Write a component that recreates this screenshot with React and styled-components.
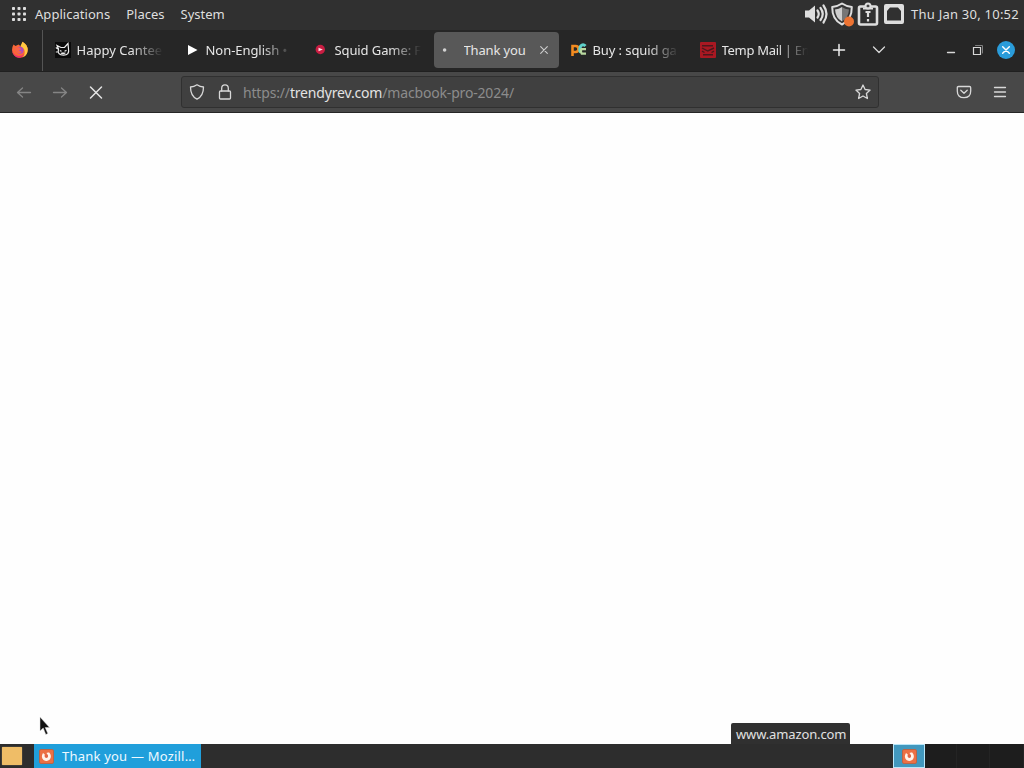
import React from 'react';
import styled, { createGlobalStyle } from 'styled-components';

const GlobalStyle = createGlobalStyle`
    * {
        box-sizing: border-box;
    }
    body {
        margin: 0;
        overflow: hidden;
        background: #fefefe;
    }
`;

const Desktop = styled.div`
    position: relative;
    display: flex;
    flex-direction: column;
    width: 1024px;
    height: 768px;
    overflow: hidden;
    font-family: "Noto Sans", "Open Sans", sans-serif;
    font-size: 13px;
    color: #dfdfdf;
    cursor: default;
`;

const Icon = styled.svg`
    display: block;
    flex: none;
    overflow: visible;
`;

const Text = styled.span`
    letter-spacing: ${(props) => props.$track || 0}px;
    white-space: nowrap;
`;

const TopPanel = styled.header`
    display: flex;
    align-items: center;
    height: 30px;
    padding: 0 3px 2px 12px;
    background: #303030;
`;

const Menu = styled.nav`
    display: flex;
    gap: 16px;
    margin-left: 9px;
    flex: 1;
`;

const Tray = styled.div`
    display: flex;
    align-items: center;
    gap: 2px;
    margin-right: 5px;
`;

const Clock = styled.div`
    width: 110px;
`;

const TabBar = styled.div`
    display: flex;
    align-items: stretch;
    height: 41px;
    background: #262626;
`;

const Pinned = styled.div`
    display: flex;
    align-items: center;
    width: 43px;
    padding: 0 0 1px 11px;
    margin-right: 2px;
    border-right: 1px solid #545454;
`;

const TabBox = styled.div`
    display: flex;
    align-items: center;
    width: 125px;
    height: 36px;
    margin: 2px 2px 0;
    padding: 0 8px;
    border-radius: 4px;
    background: ${(props) => (props.$active ? '#585858' : 'transparent')};
`;

const TabLabel = styled.div`
    width: ${(props) => (props.$active ? 76 : 88)}px;
    flex: none;
    margin-left: 5.5px;
    overflow: hidden;
    white-space: nowrap;
    letter-spacing: ${(props) => props.$track || 0}px;
    color: #e6e6e6;
    mask-image: ${(props) => (props.$active ? 'none' : 'linear-gradient(to right, #000 62%, transparent 98%)')};
`;

const TabTools = styled.div`
    display: flex;
    align-items: center;
    gap: 27px;
    padding: 0 0 2px 14px;
    flex: 1;
`;

const WindowButtons = styled.div`
    display: flex;
    align-items: center;
    gap: 16px;
    padding: 0 9px 1px 0;
`;

const CloseButton = styled.div`
    display: flex;
    align-items: center;
    justify-content: center;
    width: 18px;
    height: 18px;
    margin-left: -3px;
    border-radius: 50%;
    background: #2a9cda;
`;

const NavBar = styled.div`
    display: flex;
    align-items: center;
    height: 42px;
    padding: 0 16px;
    border-top: 1px solid #202020;
    border-bottom: 1px solid #262626;
    background: #484848;
`;

const NavButtons = styled.div`
    display: flex;
    gap: 20px;
    width: 165px;
`;

const UrlBar = styled.div`
    display: flex;
    align-items: center;
    width: 698px;
    height: 32px;
    padding: 0 7px;
    border: 1px solid #303030;
    border-radius: 3px;
    background: #404040;
`;

const LockIcon = styled(Icon)`
    margin-left: 12px;
`;

const Url = styled.div`
    flex: 1;
    margin-left: 10px;
    font-size: 14px;
    color: #8c8c8c;
    white-space: nowrap;
    letter-spacing: -0.17px;
`;

const Domain = styled.span`
    color: #e3e3e3;
`;

const NavRight = styled.div`
    display: flex;
    gap: 20px;
    margin-left: auto;
`;

const Page = styled.main`
    flex: 1;
    background: #fefefe;
`;

const Taskbar = styled.footer`
    display: flex;
    height: 24px;
    background: #2d2d2d;
`;

const ShowDesktop = styled.div`
    width: 20px;
    height: 18px;
    margin: 3px 12px 0 2px;
    border-radius: 1px;
    background: #efbd67;
    box-shadow: 0 0 1px #fbd690;
`;

const Task = styled.div`
    display: flex;
    align-items: center;
    gap: 8px;
    width: 167px;
    padding-left: 5px;
    background: #209fdb;
    color: #eef9ff;
`;

const Workspaces = styled.div`
    display: grid;
    grid-template-columns: 32px 32px 33px 34px;
    margin-left: auto;
`;

const Workspace = styled.div`
    display: flex;
    align-items: center;
    justify-content: center;
    border: ${(props) => (props.$current ? '1px solid #b9e7fa' : '0')};
    border-right: ${(props) => (props.$current ? '1px solid #b9e7fa' : '1px solid #242424')};
    background: ${(props) => (props.$current ? '#4298be' : '#1d1d1d')};
`;

const StatusTip = styled.div`
    position: absolute;
    left: 731px;
    bottom: 24px;
    width: 119px;
    height: 21px;
    padding-left: 5px;
    border-radius: 2px 2px 0 0;
    background: #303030;
    color: #e1e1e1;
    line-height: 23px;
`;

const Pointer = styled.div`
    position: absolute;
    left: 40px;
    top: 717px;
`;

const line = {
    fill: 'none',
    stroke: '#d8d8d8',
    strokeWidth: 1.3,
    strokeLinecap: 'round',
    strokeLinejoin: 'round',
};

const AppsIcon = () => (
    <Icon width="14" height="14" fill="#dedede">
        {[0, 5.5, 11].map((y) =>
            [0, 5.5, 11].map((x) => <rect key={`${x}-${y}`} x={x} y={y} width="3" height="3" rx="0.8" />)
        )}
    </Icon>
);

const VolumeIcon = () => (
    <Icon width="24" height="24" viewBox="0 0 24 24">
        <path d="M1 8.500h4l6-5v17l-6-5H1z" fill="#dedede" />
        <path d="M13.500 8.500q2.500 3.500 0 7M16.500 6q4.500 6 0 12M19.500 3.500q6 8.500 0 17" fill="none" stroke="#dedede" strokeWidth="2.200" strokeLinecap="round" />
    </Icon>
);

const UpdateIcon = () => (
    <Icon width="24" height="24" viewBox="0 0 24 24">
        <path d="M12 1.500q5 3.200 9.800 3.600Q22 18 12 22.500 2 18 2.200 5.100 7 4.700 12 1.500z" fill="#343434" stroke="#dedede" strokeWidth="2" strokeLinejoin="round" />
        <path d="M12 5v14.500Q5.500 16 5 7.500 9 7 12 5z" fill="#cecece" />
        <path d="M12 5v14.500Q18.500 16 19 7.500 15 7 12 5z" fill="#777" />
        <circle cx="19" cy="19.500" r="5" fill="#ed7332" />
    </Icon>
);

const ClipboardIcon = () => (
    <Icon width="24" height="24" viewBox="0 0 24 24">
        <rect x="3" y="4.500" width="18" height="18" rx="1.500" fill="none" stroke="#dedede" strokeWidth="2.600" />
        <circle cx="12" cy="4" r="2.500" fill="#444" stroke="#dedede" strokeWidth="2" />
        <path d="M7 6.500h10M9.500 10h5M12 9v6M12 17v2.500" stroke="#dedede" strokeWidth="2.200" />
    </Icon>
);

const NetworkIcon = () => (
    <Icon width="24" height="24" viewBox="0 0 24 24">
        <path d="M4 2h16q2 0 2 2v16q0 2-2 2H4q-2 0-2-2V4q0-2 2-2zM5 18.500h14V9l-3-3.500H8L5 9z" fill="#dedede" fillRule="evenodd" />
    </Icon>
);

const FirefoxIcon = () => (
    <Icon width="18" height="18" viewBox="0 0 18 18">
        <path d="M2.500 3.500l2 1.500 3-1.500 2.500 2L11.500.7q5.200 3 5.200 8.300A7.800 7.800 0 0 1 1 9Q1 6 2.500 3.500z" fill="#fa6638" />
        <path d="M11.500.7q5.200 3 5.200 8.300 0 5-4.700 7.300 3-4 1-8.300L9.500 5z" fill="#ffc840" />
        <path d="M1.200 8.500q.8 5.500 6 6.500 3.800.3 6-2.500-1.500 4.300-5.700 4.300-5.800-.8-6.300-8.300z" fill="#ed2e6c" />
        <circle cx="9" cy="9.300" r="3.500" fill="#a94ac0" />
        <path d="M4 7q2-2 5 0l1.500 1-2.500 1.300q1 1.700 3.200.8Q9 13.500 6.300 12 4 10.500 4 7z" fill="#f7634a" />
    </Icon>
);

const CatIcon = () => (
    <Icon width="16" height="16" viewBox="0 0 16 16">
        <rect width="16" height="16" fill="#0b0b0b" />
        <path d="M3.500 7L2 3.500l4 2h3.500L13 1.500 13.500 7q1.200 6.200-5 6.200-6.500 0-5-6.200zM.8 5.500l2 1.500M.8 10h2" fill="none" stroke="#eee" strokeWidth="1.200" />
        <path d="M4.800 8.600l1.800.6M9.500 9.200l2-.8M5.800 11l1.400.6.800-.8.900.8 1.500-.8" fill="none" stroke="#eee" strokeWidth="1.200" />
    </Icon>
);

const PlayIcon = () => (
    <Icon width="16" height="16" viewBox="0 0 16 16">
        <path d="M4 3l9.500 5L4 13z" fill="#fff" />
    </Icon>
);

const RedPlayIcon = () => (
    <Icon width="16" height="16" viewBox="0 0 16 16">
        <circle cx="7.300" cy="7.500" r="4.700" fill="#c91d42" />
        <path d="M5.500 5.700l4.300 1.800-4.300 1.800z" fill="#ffdfe5" />
    </Icon>
);

const LoadingIcon = () => (
    <Icon width="16" height="16" viewBox="0 0 16 16">
        <circle cx="2.600" cy="8" r="1.800" fill="#d2d2d2" />
    </Icon>
);

const PcIcon = () => (
    <Icon width="16" height="16" viewBox="0 0 16 16">
        <path d="M1.500 14V4h3q3 0 3 3t-3 3h-3" fill="none" stroke="#f28b20" strokeWidth="2.600" />
        <path d="M14.500 4Q12 1.500 9.700 4q-2 3.500 0 6.500" fill="none" stroke="#5fd1ca" strokeWidth="3" />
        <path d="M15 7.200h-4.500q-1.300 2 .2 4.500H15" fill="none" stroke="#b9d9a0" strokeWidth="2.200" />
    </Icon>
);

const MailIcon = () => (
    <Icon width="16" height="16" viewBox="0 0 16 16">
        <rect width="16" height="16" rx="1" fill="#a91822" />
        <path d="M2 3.800h11M2 6l5.800 3L14 6M2 9.200l2.500 1.300M14 9.200l-2.500 1.300M3 12.800h10" fill="none" stroke="#4b171c" strokeWidth="1.400" />
    </Icon>
);

const CrossIcon = ({ size, color = '#d8d8d8', width = 1.3 }) => (
    <Icon width={size} height={size} viewBox="0 0 12 12" {...line} stroke={color} strokeWidth={width}>
        <path d="M1 1l10 10M11 1L1 11" />
    </Icon>
);

const ArrowIcon = ({ flip }) => (
    <Icon width="16" height="16" viewBox="0 0 16 16" {...line} stroke="#858585">
        <path d={flip ? 'M1.500 8.500h13M9.500 4l5 4.500-5 4.500' : 'M14.500 8.500h-13M6.500 4l-5 4.500 5 4.500'} />
    </Icon>
);

const TaskIcon = () => (
    <Icon width="15" height="15" viewBox="0 0 15 15">
        <rect x="0.500" y="0.500" width="14" height="14" rx="1.500" fill="#ec7044" stroke="#b96548" />
        <path d="M4 4Q1.500 8 4.500 11q3.500 2.200 6.300-.5 2.500-3.500-.6-7-2-.3-2.700.5Q10.500 7.500 7.500 9 5 8.500 5.800 5.500z" fill="#fff3eb" />
        <circle cx="7.400" cy="7" r="1.600" fill="#e26447" />
    </Icon>
);

const tabs = [
    { title: 'Happy Cantee', icon: CatIcon, track: 0 },
    { title: 'Non-English •', icon: PlayIcon, track: -0.05 },
    { title: 'Squid Game: F', icon: RedPlayIcon, track: -0.1 },
    { title: 'Thank you', icon: LoadingIcon, track: -0.15, active: true },
    { title: 'Buy : squid ga', icon: PcIcon, track: -0.1 },
    { title: 'Temp Mail | En', icon: MailIcon, track: -0.3 },
];

const Tab = ({ title, icon: TabIcon, track, active }) => (
    <TabBox $active={active}>
        <TabIcon />
        <TabLabel $active={active} $track={track}>{title}</TabLabel>
        {active && <CrossIcon size="8" color="#cccccc" width={1.7} />}
    </TabBox>
);

const App = () => {
    return (
        <>
            <GlobalStyle />
            <Desktop>
                <TopPanel>
                    <AppsIcon />
                    <Menu>
                        <Text $track={0.04}>Applications</Text>
                        <Text>Places</Text>
                        <Text>System</Text>
                    </Menu>
                    <Tray>
                        <VolumeIcon />
                        <UpdateIcon />
                        <ClipboardIcon />
                        <NetworkIcon />
                    </Tray>
                    <Clock><Text $track={0.24}>Thu Jan 30, 10:52</Text></Clock>
                </TopPanel>

                <TabBar>
                    <Pinned><FirefoxIcon /></Pinned>
                    {tabs.map((tab) => <Tab key={tab.title} {...tab} />)}
                    <TabTools>
                        <Icon width="12" height="12" {...line} stroke="#eeeeee" strokeWidth="1.5">
                            <path d="M6 .5v11M.5 6h11" />
                        </Icon>
                        <Icon width="14" height="12" {...line}>
                            <path d="M1.500 3L7 8.500 12.500 3" />
                        </Icon>
                    </TabTools>
                    <WindowButtons>
                        <Icon width="10" height="10" {...line}><path d="M1.500 7.500h7" /></Icon>
                        <Icon width="12" height="12" {...line} strokeWidth="1.2" strokeLinejoin="miter">
                            <path d="M1.500 3.500h7v7h-7z" />
                            <path d="M3.500 1.500h7V9" stroke="#808080" strokeWidth="1" />
                        </Icon>
                        <CloseButton><CrossIcon size="8" color="#ffffff" width={2.2} /></CloseButton>
                    </WindowButtons>
                </TabBar>

                <NavBar>
                    <NavButtons>
                        <ArrowIcon />
                        <ArrowIcon flip />
                        <Icon width="16" height="16" {...line} stroke="#e5e5e5" strokeWidth="1.500">
                            <path d="M2.500 3l11 11M13.500 3l-11 11" />
                        </Icon>
                    </NavButtons>
                    <UrlBar>
                        <Icon width="16" height="16" {...line}>
                            <path d="M8 .8q3 2 6.500 2.200Q14.500 12 8 15.200 1.500 12 1.500 3 5 2.800 8 .8z" />
                        </Icon>
                        <LockIcon width="16" height="16" {...line}>
                            <rect x="2.500" y="7" width="11" height="8" rx="1" />
                            <path d="M4.700 7V4.200a3.300 3.300 0 0 1 6.600 0V7" />
                        </LockIcon>
                        <Url>https://<Domain>trendyrev.com</Domain>/macbook-pro-2024/</Url>
                        <Icon width="16" height="16" {...line}>
                            <path d="M8 1l2.100 4.500 5 .6-3.700 3.400 1 5L8 12l-4.400 2.500 1-5L.9 6.100l5-.6z" />
                        </Icon>
                    </UrlBar>
                    <NavRight>
                        <Icon width="16" height="16" {...line}>
                            <path d="M2.500 2.500h11q1.200 0 1.200 1.200V7q0 6.700-6.700 6.700T1.300 7V3.700q0-1.200 1.200-1.200zM4.800 6.300L8 9.300l3.200-3" />
                        </Icon>
                        <Icon width="16" height="16" {...line}>
                            <path d="M2.500 3.500h11M2.500 8h11M2.500 12.500h11" />
                        </Icon>
                    </NavRight>
                </NavBar>

                <Page />

                <Taskbar>
                    <ShowDesktop />
                    <Task>
                        <TaskIcon />
                        <Text $track={0.21}>Thank you — Mozill…</Text>
                    </Task>
                    <Workspaces>
                        <Workspace $current><TaskIcon /></Workspace>
                        <Workspace />
                        <Workspace />
                        <Workspace />
                    </Workspaces>
                </Taskbar>

                <StatusTip><Text $track={-0.13}>www.amazon.com</Text></StatusTip>
                <Pointer>
                    <Icon width="12" height="19" viewBox="0 0 12 19">
                        <path d="M0 0v14l3.200-3 2.600 6.500 2-.9-2.600-6.100H9.500z" fill="#111" stroke="#ddd" strokeWidth="0.500" />
                    </Icon>
                </Pointer>
            </Desktop>
        </>
    );
};

export default App;
